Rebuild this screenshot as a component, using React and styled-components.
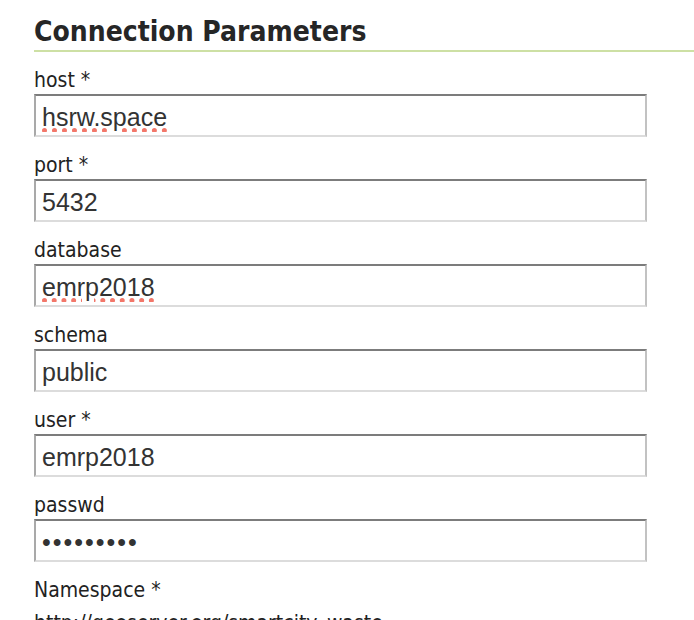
import React from "react";
import styled, { createGlobalStyle } from "styled-components";

const GlobalStyle = createGlobalStyle`
  html, body {
    margin: 0;
    padding: 0;
    background: #ffffff;
  }
  body {
    font-family: "DejaVu Sans Condensed", "DejaVu Sans", sans-serif;
    color: #222222;
    overflow: hidden;
  }
`;

const Page = styled.div`
  width: 694px;
  height: 620px;
  overflow: hidden;
  padding-left: 34px;
  box-sizing: border-box;
`;

const Heading = styled.h2`
  margin: 0;
  padding: 17px 0 3px 0;
  font-family: "DejaVu Sans Condensed", "DejaVu Sans", sans-serif;
  font-weight: bold;
  font-size: 28px;
  line-height: 30px;
  color: #262626;
  border-bottom: 2px solid #cde0a4;
`;

const Form = styled.div`
  display: flex;
  flex-direction: column;
`;

const Field = styled.div`
  display: flex;
  flex-direction: column;
`;

const Label = styled.label`
  display: block;
  padding-top: 14px;
  font-size: 21px;
  line-height: 28px;
  color: #222222;
`;

const TextInput = styled.input`
  width: 613px;
  height: 43px;
  box-sizing: border-box;
  margin: 0;
  padding: 3px 6px 0 6px;
  border-style: solid;
  border-width: 2px;
  border-top-color: #7c7c7c;
  border-left-color: #a9a9a9;
  border-right-color: #c2c2c2;
  border-bottom-color: #dcdcdc;
  background: #ffffff;
  font-family: "Liberation Sans", Arial, sans-serif;
  font-size: 25px;
  color: #333333;
  outline: none;
  letter-spacing: ${(p) => (p.type === "password" ? "2px" : "0")};
  text-decoration: ${(p) => (p.$misspelled ? "underline dotted #f2776a" : "none")};
  text-decoration-thickness: 5px;
  text-underline-offset: 2px;
`;

const StaticValue = styled.div`
  padding-top: 5px;
  font-size: 21px;
  line-height: 28px;
  color: #222222;
  white-space: nowrap;
`;

const fields = [
  { label: "host *", value: "hsrw.space", misspelled: true },
  { label: "port *", value: "5432" },
  { label: "database", value: "emrp2018", misspelled: true },
  { label: "schema", value: "public" },
  { label: "user *", value: "emrp2018" },
  { label: "passwd", value: "secretpwd", type: "password" },
];

export default function App() {
  return (
    <>
      <GlobalStyle />
      <Page>
        <Heading>Connection Parameters</Heading>
        <Form>
          {fields.map((f) => (
            <Field key={f.label}>
              <Label>{f.label}</Label>
              <TextInput
                type={f.type || "text"}
                defaultValue={f.value}
                $misspelled={f.misspelled}
                spellCheck={false}
              />
            </Field>
          ))}
          <Field>
            <Label>Namespace *</Label>
            <StaticValue>http://geoserver.org/smartcity_waste</StaticValue>
          </Field>
        </Form>
      </Page>
    </>
  );
}
